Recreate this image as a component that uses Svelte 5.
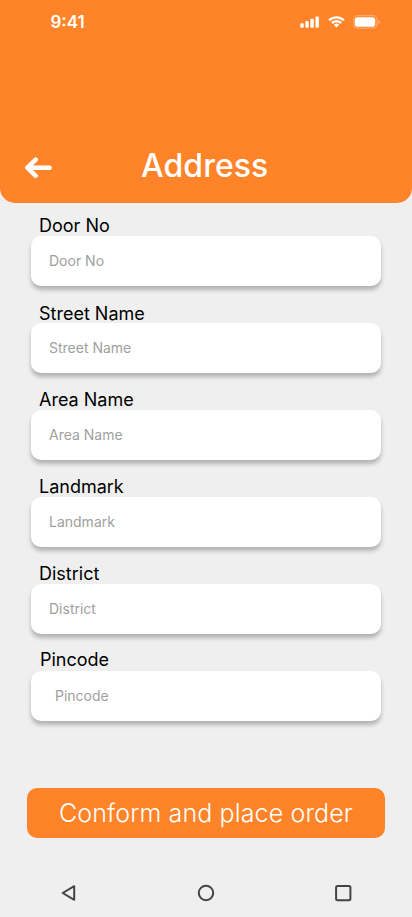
<script>
  const fields = [
    { label: 'Door No', shift: 0 },
    { label: 'Street Name', shift: 1 },
    { label: 'Area Name', shift: 0 },
    { label: 'Landmark', shift: 0 },
    { label: 'District', shift: 0 },
    { label: 'Pincode', shift: -1, inset: true }
  ];
</script>

<main class="screen">
  <header class="header">
    <div class="status">
      <span class="time">9:41</span>
      <div class="indicators">
        <svg class="signal" width="20" height="12" viewBox="0 0 20 12" fill="#fff">
          <rect x="0.3" y="7.3" width="3.4" height="4.4" rx="0.9" />
          <rect x="5.4" y="5" width="3.4" height="6.7" rx="0.9" />
          <rect x="10.4" y="2.7" width="3.4" height="9" rx="0.9" />
          <rect x="15.5" y="0.4" width="3.4" height="11.3" rx="0.9" />
        </svg>
        <svg class="wifi" width="17" height="12" viewBox="0 0 17 12" fill="#fff">
          <path d="M8.5 2.5c2.4 0 4.6.9 6.3 2.5.1.1.3.1.5 0l1.2-1.2c.2-.2.2-.4 0-.5C12.1-.9 4.9-.9.5 3.3c-.2.1-.2.3 0 .5L1.7 5c.2.1.4.1.5 0 1.7-1.6 4-2.5 6.3-2.5Zm0 3.9c1.3 0 2.5.5 3.5 1.3.1.2.4.2.5 0l1.2-1.2c.2-.2.2-.4 0-.5-2.9-2.8-7.5-2.8-10.4 0-.2.1-.2.4 0 .5l1.2 1.2c.1.2.4.2.5 0 1-.8 2.2-1.3 3.5-1.3Zm2.4 2.6c.2-.2.1-.4 0-.5-1.4-1.2-3.4-1.2-4.8 0-.1.1-.2.3 0 .5l2.1 2.2c.2.2.4.2.6 0L10.9 9Z" />
        </svg>
        <svg class="battery" width="28" height="14" viewBox="0 0 28 14">
          <rect x="0" y="0.7" width="24" height="12.5" rx="4" fill="none" stroke="#fff" stroke-opacity="0.35" />
          <rect x="1.7" y="2.2" width="20.5" height="9.5" rx="2.7" fill="#fff" />
          <path d="M25.5 5v4c.8-.3 1.4-1.1 1.4-2s-.6-1.7-1.4-2Z" fill="#fff" fill-opacity="0.4" />
        </svg>
      </div>
    </div>
    <div class="title-row">
      <button class="back" aria-label="Back">
        <svg width="28" height="22" viewBox="0 0 28 22" fill="none" stroke="#fff" stroke-width="4.5" stroke-linecap="round" stroke-linejoin="round">
          <path d="M11.7 2.6 3.4 10.7l8.300 8.100M4 10.700h21.600" />
        </svg>
      </button>
      <h1>Address</h1>
    </div>
  </header>

  <form class="form">
    {#each fields as field}
      <label class="field" class:inset={field.inset}>
        <span class="label" style="line-height: {20 + field.shift * 2}px">{field.label}</span>
        <input type="text" placeholder={field.label} />
      </label>
    {/each}
    <button class="submit" type="button">Conform and place order</button>
  </form>

  <nav class="nav">
    <svg width="18" height="18" viewBox="0 0 18 18"><path d="M14.2 2.2v13.6L2.7 9Z" /></svg>
    <svg width="18" height="18" viewBox="0 0 18 18"><circle cx="9" cy="9" r="7.2" /></svg>
    <svg width="18" height="18" viewBox="0 0 18 18"><rect x="2.1" y="1.9" width="14.3" height="14.3" rx="1.5" /></svg>
  </nav>
</main>

<style>
  :global(body) {
    background: #efefef;
  }
  .screen {
    width: 412px;
    height: 917px;
    display: flex;
    flex-direction: column;
    background: #efefef;
    font-family: Inter, sans-serif;
    overflow: hidden;
  }
  .header {
    height: 203px;
    flex: none;
    background: #ff8429;
    border-radius: 0 0 15px 15px;
    color: #fff;
    display: flex;
    flex-direction: column;
    justify-content: space-between;
  }
  .status {
    height: 44px;
    display: flex;
    align-items: center;
    justify-content: space-between;
    padding: 0 31px 0 50.5px;
  }
  .time {
    font-size: 17px;
    font-weight: 600;
    letter-spacing: 0;
  }
  .indicators {
    display: flex;
    align-items: center;
  }
  .wifi,
  .battery {
    margin-left: 8px;
  }
  svg {
    display: block;
  }
  .title-row {
    height: 74px;
    display: grid;
    grid-template-columns: 141px 1fr;
    align-items: center;
  }
  .back {
    margin: 4px 0 0 24px;
    padding: 0;
    width: 28px;
    height: 22px;
    border: 0;
    background: none;
  }
  h1 {
    margin: 0;
    font-size: 32px;
    font-weight: 500;
    line-height: 40px;
    letter-spacing: 0.05px;
  }
  .form {
    display: flex;
    flex-direction: column;
    gap: 17px;
    padding: 13px 27px 0;
  }
  .field {
    display: flex;
    flex-direction: column;
    padding: 0 4px;
  }
  .label {
    height: 20px;
    font-size: 18px;
    letter-spacing: 0;
    padding-left: 8px;
    color: #000;
  }
  .inset .label {
    padding-left: 9px;
  }
  input {
    box-sizing: border-box;
    width: 350px;
    height: 50px;
    border: 0;
    border-radius: 10px;
    background: #fff;
    padding: 0 18px 2px;
    font: 14px Inter, sans-serif;
    letter-spacing: 0;
    box-shadow: 0 4px 4px rgba(0, 0, 0, 0.25);
    outline: none;
  }
  input::placeholder {
    color: #a0a0a0;
    opacity: 1;
  }
  .inset input {
    padding-left: 24px;
  }
  .submit {
    height: 50px;
    margin-top: 50px;
    padding: 0;
    border: 0;
    border-radius: 10px;
    background: #ff8429;
    color: #fff;
    font: 300 25px Inter, sans-serif;
    letter-spacing: 0.12px;
  }
  .nav {
    margin-top: auto;
    height: 48px;
    display: flex;
    align-items: center;
    justify-content: space-between;
    padding: 0 60px;
  }
  .nav svg {
    fill: none;
    stroke: #444;
    stroke-width: 2;
    stroke-linejoin: round;
  }
</style>
